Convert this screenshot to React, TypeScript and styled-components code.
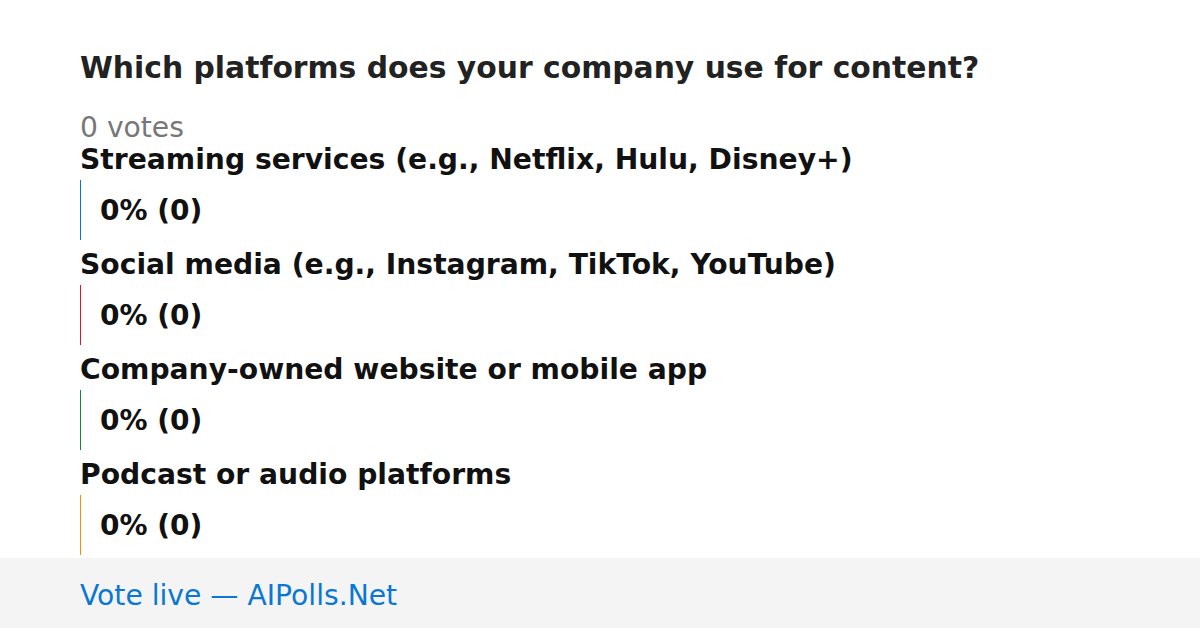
import styled, { createGlobalStyle } from "styled-components";

const GlobalStyle = createGlobalStyle`
  html, body {
    margin: 0;
    padding: 0;
    background: #ffffff;
    font-family: "DejaVu Sans", "Liberation Sans", sans-serif;
  }
`;

const Page = styled.div`
  display: flex;
  flex-direction: column;
  height: 628px;
  overflow: hidden;
`;

const Main = styled.div`
  flex: 1;
  min-height: 0;
  padding: 50px 80px 0;
`;

const Question = styled.h1`
  margin: 0 0 27px;
  font-size: 29.8px;
  line-height: 36px;
  font-weight: 700;
  color: #222222;
`;

const Votes = styled.div`
  font-size: 28.2px;
  line-height: 30px;
  color: #777777;
`;

const Option = styled.div`
  margin-bottom: 8px;

  &:last-child {
    margin-bottom: 0;
  }
`;

const OptionLabel = styled.div`
  font-size: 28.2px;
  line-height: 33px;
  font-weight: 700;
  color: #111111;
  margin-bottom: 4px;
`;

const Bar = styled.div<{ $color: string }>`
  height: 60px;
  display: flex;
  align-items: center;
  padding-left: 19px;
  border-left: 1px solid ${({ $color }) => $color};
  font-size: 28px;
  font-weight: 700;
  color: #111111;
`;

const Footer = styled.div`
  flex: none;
  height: 70px;
  background: #f4f4f4;
  display: flex;
  align-items: center;
  padding: 4px 80px 0;
  box-sizing: border-box;
  font-size: 28.2px;
  color: #0a78d2;
`;

const options = [
  { label: "Streaming services (e.g., Netflix, Hulu, Disney+)", color: "#0078d4" },
  { label: "Social media (e.g., Instagram, TikTok, YouTube)", color: "#e81123" },
  { label: "Company-owned website or mobile app", color: "#10893e" },
  { label: "Podcast or audio platforms", color: "#ff8c00" },
];

export default function App() {
  return (
    <>
      <GlobalStyle />
      <Page>
        <Main>
          <Question>Which platforms does your company use for content?</Question>
          <Votes>0 votes</Votes>
          {options.map((opt) => (
            <Option key={opt.label}>
              <OptionLabel>{opt.label}</OptionLabel>
              <Bar $color={opt.color}>0% (0)</Bar>
            </Option>
          ))}
        </Main>
        <Footer>Vote live — AIPolls.Net</Footer>
      </Page>
    </>
  );
}
